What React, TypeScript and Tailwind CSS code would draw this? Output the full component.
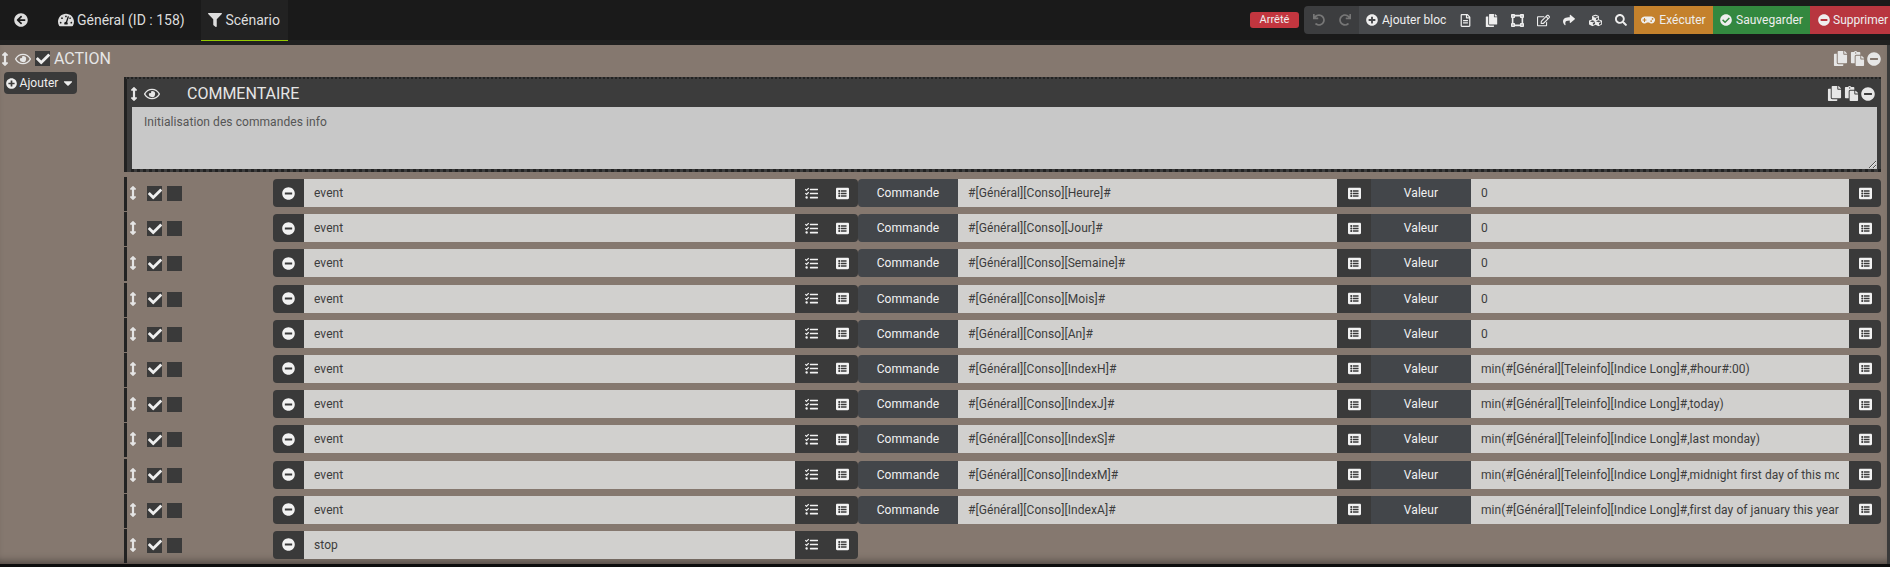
import React from "react";
import {
  FaArrowCircleLeft, FaTachometerAlt, FaFilter, FaUndo, FaRedo, FaPlusCircle, FaRegFileAlt, FaCopy,
  FaVectorSquare, FaRegEdit, FaShare, FaCubes, FaSearch, FaGamepad, FaCheckCircle, FaMinusCircle,
  FaArrowsAltV, FaRegEye, FaCheck, FaCaretDown, FaPaste, FaTasks, FaListAlt,
} from "react-icons/fa";

const rows: { name: string; cmd?: string; val?: string }[] = [
  { name: "event", cmd: "#[Général][Conso][Heure]#", val: "0" },
  { name: "event", cmd: "#[Général][Conso][Jour]#", val: "0" },
  { name: "event", cmd: "#[Général][Conso][Semaine]#", val: "0" },
  { name: "event", cmd: "#[Général][Conso][Mois]#", val: "0" },
  { name: "event", cmd: "#[Général][Conso][An]#", val: "0" },
  { name: "event", cmd: "#[Général][Conso][IndexH]#", val: "min(#[Général][Teleinfo][Indice Long]#,#hour#:00)" },
  { name: "event", cmd: "#[Général][Conso][IndexJ]#", val: "min(#[Général][Teleinfo][Indice Long]#,today)" },
  { name: "event", cmd: "#[Général][Conso][IndexS]#", val: "min(#[Général][Teleinfo][Indice Long]#,last monday)" },
  { name: "event", cmd: "#[Général][Conso][IndexM]#", val: "min(#[Général][Teleinfo][Indice Long]#,midnight first day of this month)" },
  { name: "event", cmd: "#[Général][Conso][IndexA]#", val: "min(#[Général][Teleinfo][Indice Long]#,first day of january this year)" },
  { name: "stop" },
];

function Field({ value }: { value: string }) {
  return (
    <input
      readOnly
      value={value}
      className="h-[28px] min-w-0 flex-1 bg-[#d1d0ce] px-[10px] text-[12px] tracking-[0.07px] text-[#3c3c3c] outline-none"
    />
  );
}

function Check({ on }: { on?: boolean }) {
  return (
    <span className="flex h-[15px] w-[15px] items-center justify-center bg-[#3a3a3a] text-[#eeeeee]">
      {on && <FaCheck size={14} />}
    </span>
  );
}

function Label({ children, w }: { children: string; w: string }) {
  return (
    <span className={`flex h-[28px] items-center justify-center bg-[#43464a] text-[12px] tracking-[0.07px] text-[#f2f2f2] ${w}`}>
      {children}
    </span>
  );
}

function ListBtn({ w }: { w: string }) {
  return (
    <span className={`flex h-[28px] items-center justify-center text-[#f2f2f2] ${w}`}>
      <FaListAlt size={13} />
    </span>
  );
}

function Row({ name, cmd, val }: { name: string; cmd?: string; val?: string }) {
  return (
    <div className="flex h-[35.2px] pt-[1px]">
      <div className="mb-[0.2px] w-[3px] bg-[#222222]" />
      <div className="mt-[9px] flex w-[146px] items-start">
        <FaArrowsAltV size={14} className="-ml-[1px] text-[#e4e4e4]" />
        <span className="ml-[7px] flex gap-[5px]">
          <Check on />
          <Check />
        </span>
      </div>
      <div className="mt-[2px] flex h-[28px] flex-1">
        <div className="flex w-[585px]">
          <span className="flex w-[31px] items-center justify-center rounded-l-[4px] bg-[#3a3a3a] text-[#f2f2f2]">
            <FaMinusCircle size={13} />
          </span>
          <Field value={name} />
          <span className="flex w-[32px] items-center justify-center bg-[#3a3a3a] text-[#f2f2f2]">
            <FaTasks size={13} />
          </span>
          <span className="rounded-r-[4px] bg-[#3a3a3a]">
            <ListBtn w="w-[31px]" />
          </span>
        </div>
        {cmd && (
          <div className="flex w-[513px]">
            <Label w="w-[100px] rounded-l-[4px]">Commande</Label>
            <Field value={cmd} />
            <span className="bg-[#3a3a3a]">
              <ListBtn w="w-[34px]" />
            </span>
          </div>
        )}
        {val && (
          <div className="flex w-[510px]">
            <Label w="w-[100px]">Valeur</Label>
            <Field value={val} />
            <span className="rounded-r-[4px] bg-[#3a3a3a]">
              <ListBtn w="w-[32px]" />
            </span>
          </div>
        )}
      </div>
    </div>
  );
}

function BlockTools({ cls }: { cls: string }) {
  return (
    <span className={`flex items-center text-[#e6e6e6] ${cls}`}>
      <FaCopy size={15} />
      <FaPaste size={15} className="ml-[2px]" />
      <FaMinusCircle size={14} className="ml-[2px]" />
    </span>
  );
}

export default function App() {
  const tool = "flex w-[26px] justify-center";
  return (
    <div
      className="flex h-[567px] w-[1890px] flex-col overflow-hidden bg-[#85786f] text-[12px]"
      style={{ fontFamily: "Roboto, 'Liberation Sans', sans-serif" }}
    >
      <header className="flex h-[40px] shrink-0 items-center bg-[#1a1a1a] text-[#dddddd]">
        <FaArrowCircleLeft size={14} className="ml-[14px]" />
        <span className="ml-[30px] flex items-center text-[14px]">
          <FaTachometerAlt size={16} className="mr-[3px]" />
          Général (ID : 158)
        </span>
        <span className="relative ml-[16px] flex h-[41px] w-[87px] items-center justify-center self-start border-b border-[#94ca02] bg-[#222222] text-[14px]">
          <FaFilter size={14} className="mr-[3px]" />
          Scénario
        </span>
        <div className="ml-auto flex h-[28px] items-center text-[#eeeeee]">
          <span className="mr-[5px] flex h-[16px] w-[49px] items-center justify-center rounded-[3px] bg-[#c2363f] text-[11px]">
            Arrêté
          </span>
          <span className="flex h-[28px] w-[55px] items-center justify-center gap-[14px] rounded-l-[4px] bg-[#3c3d3f] text-[#777777]">
            <FaUndo size={12} />
            <FaRedo size={12} />
          </span>
          <span className="flex h-[28px] w-[275px] items-center bg-[#47494c]">
            <span className="ml-[7px] flex w-[86px] shrink-0 items-center">
              <FaPlusCircle size={12} className="mr-[4px]" />
              Ajouter bloc
            </span>
            <span className={tool}><FaRegFileAlt size={13} /></span>
            <span className={tool}><FaCopy size={13} /></span>
            <span className={tool}><FaVectorSquare size={13} /></span>
            <span className={tool}><FaRegEdit size={13} /></span>
            <span className={tool}><FaShare size={12} /></span>
            <span className={tool}><FaCubes size={13} /></span>
            <span className={tool}><FaSearch size={12} /></span>
          </span>
          <span className="flex h-[28px] w-[79px] items-center justify-center gap-[4px] bg-[#c4812c]">
            <FaGamepad size={14} /> Exécuter
          </span>
          <span className="flex h-[28px] w-[97px] items-center justify-center gap-[4px] bg-[#33883f]">
            <FaCheckCircle size={12} /> Sauvegarder
          </span>
          <span className="flex h-[28px] w-[80px] items-center gap-[3px] bg-[#b8363f] pl-[8px]">
            <FaMinusCircle size={12} /> Supprimer
          </span>
        </div>
      </header>
      <div className="h-[5px] shrink-0 bg-[#202020]" />

      <main className="flex min-h-0 flex-1 flex-col border-r-[3px] border-[#3a3a3a] pr-[6px] shadow-[inset_0_-8px_8px_-6px_rgba(0,0,0,0.45)]">
        <div className="flex h-[27px] shrink-0 items-center text-[#e6e6e6]">
          <FaArrowsAltV size={14} className="-ml-[2px]" />
          <FaRegEye size={16} className="ml-[3px]" />
          <span className="ml-[4px]"><Check on /></span>
          <span className="ml-[4px] text-[16px]">ACTION</span>
          <BlockTools cls="ml-auto" />
        </div>
        <div className="flex min-h-0 flex-1">
          <div className="w-[124px] shrink-0">
            <button className="ml-[4px] flex h-[22px] w-[73px] items-center justify-center rounded-[4px] bg-[#3a3a3a] text-[12px] tracking-[0.07px] text-[#eeeeee]">
              <FaPlusCircle size={11} className="mr-[2px]" />
              Ajouter
              <FaCaretDown size={14} className="ml-[2px]" />
            </button>
          </div>
          <div className="min-w-0 flex-1 pt-[5px]">
            <section className="flex h-[95px] flex-col border-t-[2px] border-b-[3px] border-l-[3px] border-dotted border-t-[#222222] border-b-[#222222] border-l-[#222222] bg-[#3c3c3c] pl-[5px] pr-[4px] [border-left-style:solid]">
              <div className="flex h-[28px] shrink-0 items-center pt-[1px] text-[#e6e6e6]">
                <FaArrowsAltV size={14} className="-ml-[5px]" />
                <FaRegEye size={16} className="ml-[3px]" />
                <span className="ml-[27px] text-[16px]">COMMENTAIRE</span>
                <BlockTools cls="ml-auto mr-[2px]" />
              </div>
              <textarea
                readOnly
                value="Initialisation des commandes info"
                className="min-h-0 w-full flex-1 bg-[#c8c8c8] px-[12px] pt-[6px] text-[12px] tracking-[0.07px] text-[#555555] outline-none"
              />
            </section>
            <div className="mt-[4px]">
              {rows.map((r, i) => (
                <Row key={i} {...r} />
              ))}
            </div>
          </div>
        </div>
      </main>
      <div className="h-[3px] shrink-0 bg-[#0d0d0d]" />
    </div>
  );
}
